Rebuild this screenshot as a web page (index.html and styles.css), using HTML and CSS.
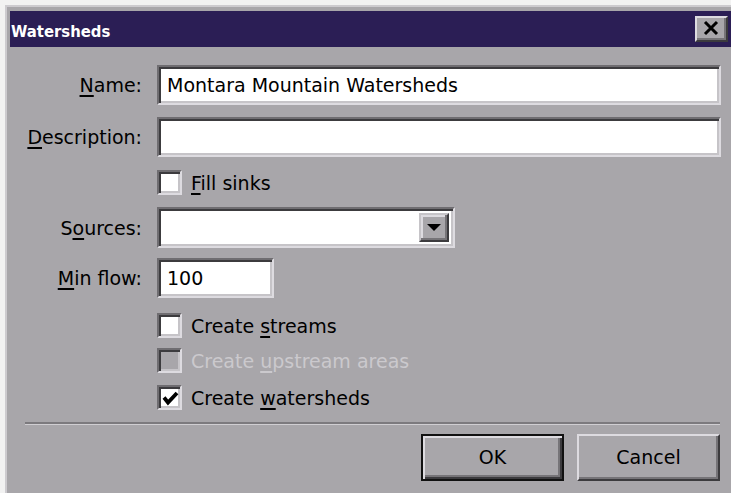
FILE: index.html
```html
<!DOCTYPE html>
<html>
<head>
<meta charset="utf-8">
<title>Watersheds</title>
<link rel="stylesheet" href="styles.css">
</head>
<body>
<div class="dialog">
  <div class="titlebar">
    <span class="title">Watersheds</span>
    <span class="close-btn">
      <svg width="18" height="16" viewBox="0 0 18 16"><path d="M3 2 L15 14 M15 2 L3 14" stroke="#000" stroke-width="3" fill="none"/></svg>
    </span>
  </div>

  <div class="form">
    <div class="row row-name">
      <label class="lbl"><u>N</u>ame:</label>
      <div class="field wide">Montara Mountain Watersheds</div>
    </div>
    <div class="row row-desc">
      <label class="lbl"><u>D</u>escription:</label>
      <div class="field wide"></div>
    </div>
    <div class="row row-fill">
      <span></span>
      <div class="check"><span class="box"></span><span class="ctext"><u>F</u>ill sinks</span></div>
    </div>
    <div class="row row-sources">
      <label class="lbl">S<u>o</u>urces:</label>
      <div class="field combo">
        <span class="combo-btn">
          <svg width="14" height="8" viewBox="0 0 14 8"><path d="M0 0 H14 L7 7 Z" fill="#000"/></svg>
        </span>
      </div>
    </div>
    <div class="row row-min">
      <label class="lbl"><u>M</u>in flow:</label>
      <div class="field short">100</div>
    </div>
    <div class="row row-streams">
      <span></span>
      <div class="check"><span class="box"></span><span class="ctext">Create <u>s</u>treams</span></div>
    </div>
    <div class="row row-up">
      <span></span>
      <div class="check disabled"><span class="box"></span><span class="ctext">Create <u>u</u>pstream areas</span></div>
    </div>
    <div class="row row-ws">
      <span></span>
      <div class="check"><span class="box">
        <svg width="17" height="15" viewBox="0 0 17 15"><path d="M2 6.5 L6 11.5 L15 2" stroke="#000" stroke-width="3.8" fill="none"/></svg>
      </span><span class="ctext">Create <u>w</u>atersheds</span></div>
    </div>
  </div>

  <div class="separator"></div>

  <div class="buttons">
    <span class="btn default"><span class="btn-face">OK</span></span>
    <span class="btn"><span class="btn-face">Cancel</span></span>
  </div>
</div>
</body>
</html>
```

FILE: styles.css
```css
html, body {
  margin: 0;
  padding: 0;
  background: #f2f2f2;
  overflow: hidden;
}

.dialog {
  margin: 5px 0 0 5px;
  width: 745px;
  height: 500px;
  background: #a8a6aa;
  border-top: 2px solid #cdcbcf;
  border-left: 2px solid #cdcbcf;
  font-family: "DejaVu Sans", "Verdana", sans-serif;
  font-size: 19px;
  color: #000;
}

u {
  text-decoration-thickness: 2px;
  text-underline-offset: 3px;
}

/* caption bar */
.titlebar {
  margin: 4px 0 0 3px;
  width: 721px;
  height: 36px;
  background: #2b1e55;
  display: flex;
  align-items: center;
  justify-content: space-between;
}

.title {
  font-family: "DejaVu Sans Condensed", "DejaVu Sans", sans-serif;
  font-stretch: condensed;
  font-weight: bold;
  font-size: 16.5px;
  color: #fff;
  padding: 4px 0 0 1px;
}

.close-btn {
  width: 33px;
  height: 26px;
  box-sizing: border-box;
  margin-right: 3px;
  background: #a8a6aa;
  border-top: 2px solid #dddbe0;
  border-left: 2px solid #dddbe0;
  border-right: 2px solid #3c3b3e;
  border-bottom: 2px solid #3c3b3e;
  box-shadow: inset -2px -2px 0 #767478;
  display: flex;
  align-items: center;
  justify-content: center;
  padding: 0 2px 2px 0;
}

/* form grid */
.form {
  padding-top: 18px;
}

.row {
  display: grid;
  grid-template-columns: 135px 1fr;
  column-gap: 15px;
  align-items: center;
}

.lbl {
  text-align: right;
  white-space: nowrap;
}

.row-desc { margin-top: 12px; }
.row-fill { margin-top: 13px; }
.row-sources { margin-top: 12px; }
.row-min { margin-top: 10px; }
.row-streams { margin-top: 15px; }
.row-up { margin-top: 10px; }
.row-ws { margin-top: 12px; }

/* sunken edit fields */
.field {
  box-sizing: border-box;
  height: 40px;
  background: #fff;
  border-top: 2px solid #6f6d71;
  border-left: 2px solid #6f6d71;
  border-right: 2px solid #dddbe0;
  border-bottom: 2px solid #dddbe0;
  box-shadow: inset 2px 2px 0 #3c3b3e, inset -2px -2px 0 #c6c4c8;
  padding: 0 0 0 8px;
  display: flex;
  align-items: center;
  white-space: nowrap;
}

.wide { width: 564px; }
.short { width: 117px; padding-left: 8px; }

.combo {
  width: 298px;
  height: 41px;
  justify-content: flex-end;
  padding: 4px 4px 4px 0;
}

.combo-btn {
  box-sizing: border-box;
  width: 30px;
  height: 100%;
  background: #a8a6aa;
  border-top: 2px solid #c6c4c8;
  border-left: 2px solid #c6c4c8;
  border-right: 2px solid #3c3b3e;
  border-bottom: 2px solid #3c3b3e;
  box-shadow: inset -2px -2px 0 #767478, inset 2px 2px 0 #dddbe0;
  display: flex;
  align-items: center;
  justify-content: center;
  padding-top: 1px;
}

/* check boxes */
.check {
  display: flex;
  align-items: center;
  gap: 9px;
  height: 25px;
}

.box {
  box-sizing: border-box;
  width: 25px;
  height: 25px;
  background: #fff;
  border-top: 2px solid #6f6d71;
  border-left: 2px solid #6f6d71;
  border-right: 2px solid #dddbe0;
  border-bottom: 2px solid #dddbe0;
  box-shadow: inset 2px 2px 0 #3c3b3e, inset -2px -2px 0 #c6c4c8;
  display: flex;
  align-items: center;
  justify-content: center;
  padding: 2px 0 0 2px;
}

.ctext {
  white-space: nowrap;
}

.check.disabled .box {
  background: #a8a6aa;
}

.check.disabled .ctext {
  color: #cbc9cd;
}

/* etched divider */
.separator {
  margin: 12px 0 0 18px;
  width: 695px;
  height: 2px;
  background: #7c7a7e;
  border-bottom: 1px solid #d0ced2;
}

/* push buttons */
.buttons {
  width: 713px;
  margin-top: 9px;
  display: flex;
  justify-content: flex-end;
  gap: 13px;
}

.btn {
  box-sizing: border-box;
  width: 143px;
  height: 47px;
  background: #a8a6aa;
  border-top: 2px solid #dddbe0;
  border-left: 2px solid #dddbe0;
  border-right: 2px solid #3c3b3e;
  border-bottom: 2px solid #3c3b3e;
  box-shadow: inset -2px -2px 0 #767478;
  display: flex;
}

.btn.default {
  border: 2px solid #111;
  box-shadow: inset 2px 2px 0 #dddbe0, inset -2px -2px 0 #3c3b3e, inset -4px -4px 0 #767478;
}

.btn-face {
  flex: 1;
  display: flex;
  align-items: center;
  justify-content: center;
  padding-bottom: 2px;
}
```
